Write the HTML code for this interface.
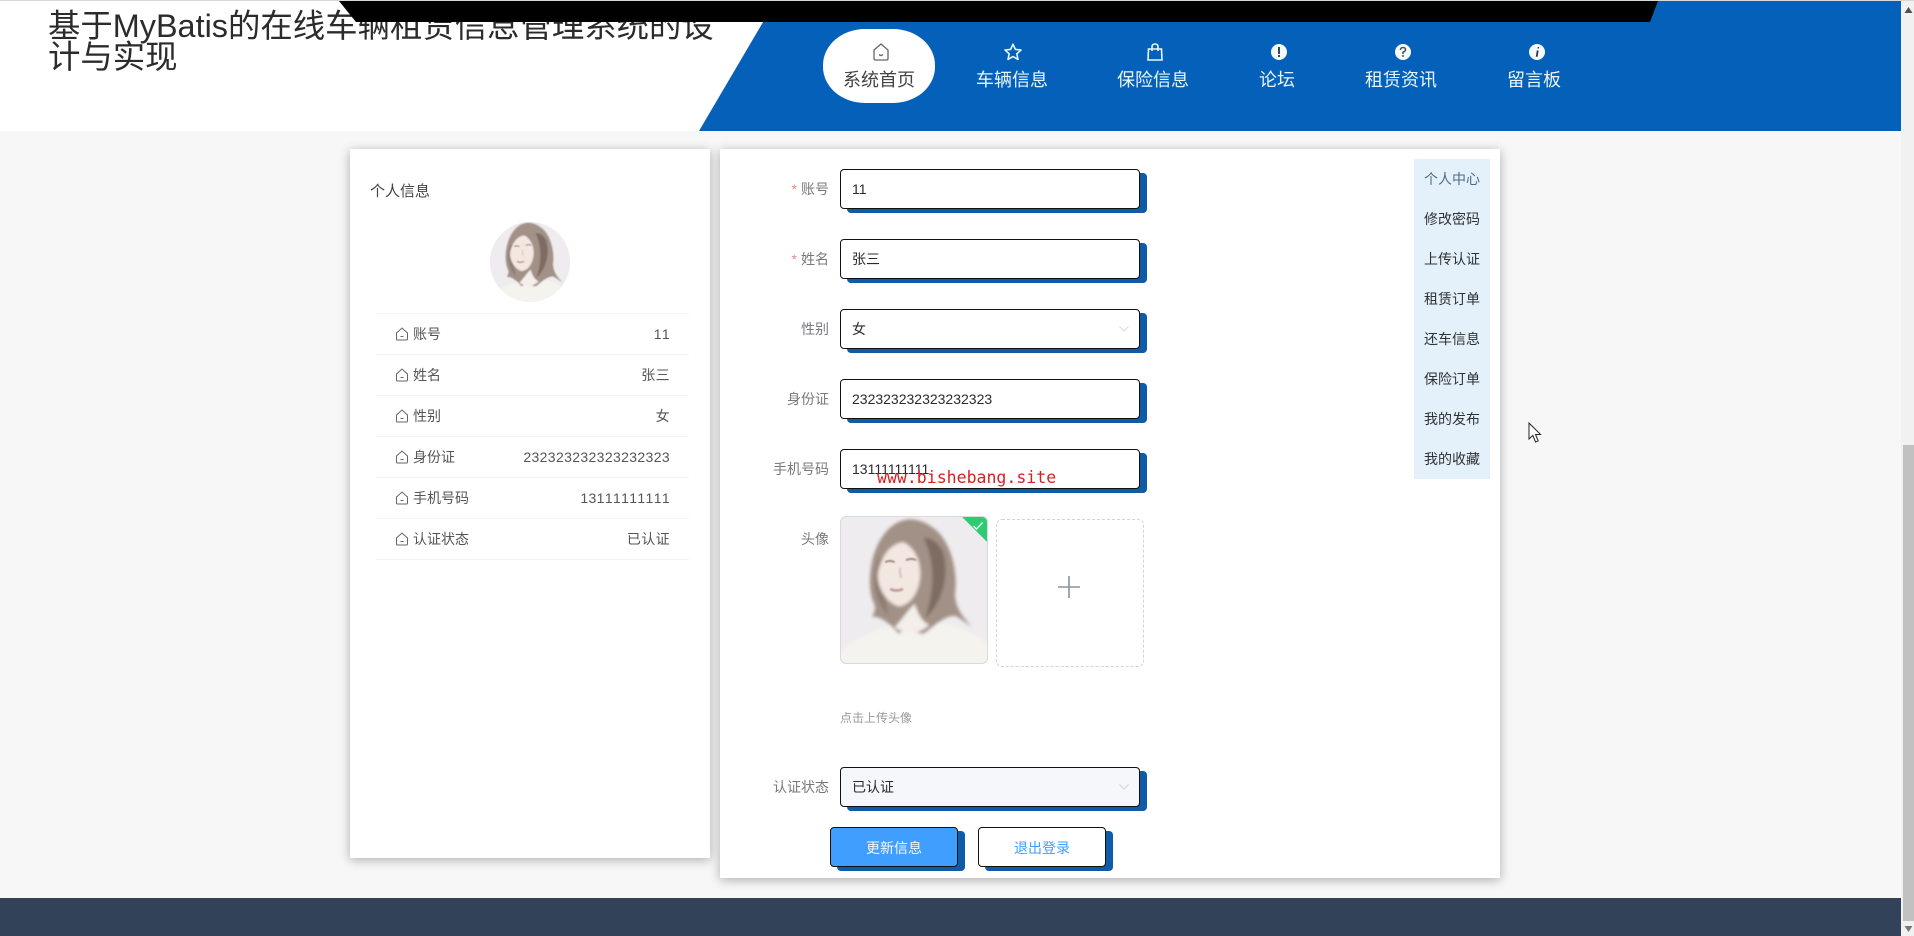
<!DOCTYPE html>
<html lang="zh">
<head>
<meta charset="utf-8">
<title>个人中心</title>
<style>
html,body{margin:0;padding:0;width:1914px;height:936px;overflow:hidden;background:#f7f7f7;}
body{position:relative;font-family:"Liberation Sans","Noto Sans CJK SC",sans-serif;color:#303133;}
.a{position:absolute;}
#hdr{left:0;top:0;width:1901px;height:131px;background:#fff;}
#topline{left:0;top:0;width:1914px;height:1px;background:#d8d8d8;z-index:9;}
#title{left:48px;top:11px;width:690px;font-size:32.4px;line-height:31px;color:#2b2b2b;}
.nl{position:absolute;top:68px;width:140px;text-align:center;font-size:18px;line-height:24px;color:#e8f6ff;}
.ni{position:absolute;top:42px;width:20px;height:20px;}
.panel{background:#fff;box-shadow:0 2px 10px rgba(0,0,0,.3);}
.row{position:absolute;left:376px;width:313px;height:41px;border-bottom:1px solid #f0f2f4;font-size:14px;color:#555;}
.row svg{position:absolute;left:19px;top:14px;}
.row .l{position:absolute;left:37px;top:1px;line-height:41px;}
.row .v{position:absolute;right:19px;top:1px;line-height:41px;letter-spacing:.36px;font-kerning:none;}
.lab{position:absolute;width:110px;left:719px;text-align:right;font-size:14px;line-height:20px;color:#77797c;}
.lab i{font-style:normal;color:#e58a8a;margin-right:4px;}
.inp{position:absolute;left:840px;width:298px;height:38px;border:1px solid #111;border-radius:4px;background:#fff;box-shadow:7px 4px 0 #0f5ba8;font-size:14px;line-height:38px;color:#2a2a2a;text-indent:11px;}
.inp svg{position:absolute;right:9px;top:15px;}
.btn{position:absolute;top:827px;width:126px;height:38px;border:1px solid #111;border-radius:4px;box-shadow:7px 4px 0 #0f5ba8;font-size:14px;line-height:40px;text-align:center;}
.m{position:absolute;left:1424px;font-size:14px;line-height:20px;color:#2f3134;white-space:nowrap;}
</style>
</head>
<body>
<svg width="0" height="0" style="position:absolute">
<defs>
<filter id="bl" x="-10%" y="-10%" width="120%" height="120%"><feGaussianBlur stdDeviation="5"/></filter>
<filter id="bl2" x="-20%" y="-20%" width="140%" height="140%"><feGaussianBlur stdDeviation="2.5"/></filter>
<g id="photo">
<rect x="0" y="0" width="480" height="480" fill="#eeecee"/>
<g filter="url(#bl)">
<path d="M0 440 C70 370 150 345 230 340 C310 335 390 340 480 420 L480 480 L0 480Z" fill="#f5f3ee"/>
<path d="M222 30 C165 34 128 88 112 150 C100 205 102 250 118 285 C124 304 112 312 112 320 C140 320 168 345 190 372 C215 350 245 372 265 372 C298 350 322 318 360 318 C378 328 395 342 410 352 C385 325 362 300 358 255 C368 190 348 110 310 70 C285 45 255 30 222 30Z" fill="#a29186"/>
<path d="M265 85 C295 150 302 225 270 325 C315 285 345 205 322 125 C305 95 285 85 265 85Z" fill="#7e6c62"/>
<path d="M130 150 C108 210 118 270 160 320 C150 260 130 220 150 140Z" fill="#8e7c71"/>
<path d="M205 98 C165 102 138 140 128 190 C124 228 150 278 190 290 C228 286 250 245 254 205 C258 160 242 118 205 98Z" fill="#f3e7e1"/>
<path d="M178 352 C200 330 215 305 238 282 C250 318 262 338 282 345 C245 378 212 375 178 352Z" fill="#f4efeb"/>
</g>
<g filter="url(#bl2)">
<path d="M150 158 q14 -8 28 0 M212 152 q16 -8 30 0" stroke="#6a564c" stroke-width="5" fill="none" opacity=".75"/>
<path d="M195 175 q-3 22 4 30" stroke="#d9c3ba" stroke-width="6" fill="none"/>
<path d="M165 238 q18 9 38 0" stroke="#b48380" stroke-width="8" fill="none" opacity=".75"/>
</g>
</g>
<path id="house" d="M1.5 6 L7 1 L12.5 6 V12 Q12.5 13 11.5 13 H2.5 Q1.5 13 1.5 12Z M5.5 9.5 H8.5" fill="none" stroke="#666" stroke-width="1"/>
</defs>
</svg>

<div id="topline" class="a"></div>
<div id="hdr" class="a"></div>
<div id="title" class="a">基于MyBatis的在线车辆租赁信息管理系统的设计与实现</div>
<svg class="a" style="left:0;top:0;" width="1901" height="131">
<polygon points="776,0 1901,0 1901,131 699,131" fill="#0460b9"/>
<polygon points="339,1 1658,1 1650,22 356,22" fill="#000"/>
</svg>

<div class="a" style="left:823px;top:29px;width:112px;height:74px;border-radius:42px/36px;background:#fff;"></div>
<div class="nl" style="left:809px;color:#444;">系统首页</div>
<div class="nl" style="left:942px;">车辆信息</div>
<div class="nl" style="left:1083px;">保险信息</div>
<div class="nl" style="left:1207px;">论坛</div>
<div class="nl" style="left:1331px;">租赁资讯</div>
<div class="nl" style="left:1464px;">留言板</div>

<svg class="ni" style="left:871px;" viewBox="0 0 20 20"><path d="M3 8 L10 2 L17 8 V16.5 Q17 18 15.5 18 H4.5 Q3 18 3 16.5Z M8 12.5 Q10 14.5 12 12.5" fill="none" stroke="#666" stroke-width="1.3"/></svg>
<svg class="ni" style="left:1003px;" viewBox="0 0 20 20"><path d="M10 2.2 L12.4 7.4 L18 8 L13.8 11.8 L15 17.4 L10 14.6 L5 17.4 L6.2 11.8 L2 8 L7.6 7.4Z" fill="none" stroke="#e8f6ff" stroke-width="1.6" stroke-linejoin="round"/></svg>
<svg class="ni" style="left:1145px;" viewBox="0 0 20 20"><path d="M3.5 7 H16.5 L17 18 H3 Z M7 9 V5 Q7 2 10 2 Q13 2 13 5 V9" fill="none" stroke="#e8f6ff" stroke-width="1.6"/></svg>
<svg class="ni" style="left:1269px;" viewBox="0 0 20 20"><circle cx="10" cy="10" r="8" fill="#f4fbff"/><rect x="9" y="5" width="2" height="7" fill="#444"/><rect x="9" y="13" width="2" height="2" fill="#444"/></svg>
<svg class="ni" style="left:1393px;" viewBox="0 0 20 20"><circle cx="10" cy="10" r="8" fill="#f4fbff"/><path d="M7.5 8 Q7.5 5.5 10 5.5 Q12.5 5.5 12.5 7.7 Q12.5 9 10 10.3 V12" fill="none" stroke="#555" stroke-width="1.6"/><rect x="9.2" y="13" width="1.7" height="1.8" fill="#555"/></svg>
<svg class="ni" style="left:1527px;" viewBox="0 0 20 20"><circle cx="10" cy="10" r="8" fill="#f4fbff"/><path d="M10.8 5 h1.4 l-.3 1.5 h-1.4z M9.8 8.5 h1.8 l-1 6.2 h-1.8z" fill="#333"/></svg>

<!-- left panel -->
<div class="a panel" style="left:350px;top:149px;width:360px;height:709px;"></div>
<div class="a" style="left:370px;top:181px;font-size:15px;line-height:22px;color:#444;">个人信息</div>
<div class="a" style="left:490px;top:222px;width:80px;height:80px;border-radius:50%;overflow:hidden;background:#eee;">
<svg width="80" height="80" viewBox="20 26 430 430"><use href="#photo"/></svg>
</div>
<div class="a" style="left:376px;top:313px;width:313px;height:1px;background:#f0f2f4;"></div>
<div class="row" style="top:313px;"><svg width="14" height="14"><use href="#house"/></svg><span class="l">账号</span><span class="v">11</span></div>
<div class="row" style="top:354px;"><svg width="14" height="14"><use href="#house"/></svg><span class="l">姓名</span><span class="v">张三</span></div>
<div class="row" style="top:395px;"><svg width="14" height="14"><use href="#house"/></svg><span class="l">性别</span><span class="v">女</span></div>
<div class="row" style="top:436px;"><svg width="14" height="14"><use href="#house"/></svg><span class="l">身份证</span><span class="v">232323232323232323</span></div>
<div class="row" style="top:477px;"><svg width="14" height="14"><use href="#house"/></svg><span class="l">手机号码</span><span class="v">13111111111</span></div>
<div class="row" style="top:518px;"><svg width="14" height="14"><use href="#house"/></svg><span class="l">认证状态</span><span class="v">已认证</span></div>

<!-- right panel -->
<div class="a panel" style="left:720px;top:149px;width:780px;height:729px;"></div>

<div class="lab" style="top:179px;"><i>*</i>账号</div>
<div class="inp" style="top:169px;">11</div>
<div class="lab" style="top:249px;"><i>*</i>姓名</div>
<div class="inp" style="top:239px;">张三</div>
<div class="lab" style="top:319px;">性别</div>
<div class="inp" style="top:309px;">女<svg width="12" height="8"><path d="M1.5 1.5 L6 6 L10.5 1.5" fill="none" stroke="#d6d9de" stroke-width="1"/></svg></div>
<div class="lab" style="top:389px;">身份证</div>
<div class="inp" style="top:379px;">232323232323232323</div>
<div class="lab" style="top:459px;">手机号码</div>
<div class="inp" style="top:449px;">13111111111</div>
<div class="a" style="left:877px;top:467px;font-family:'DejaVu Sans Mono',monospace;font-size:16.55px;line-height:22px;color:#d91f22;z-index:5;white-space:nowrap;">www.bishebang.site</div>

<div class="lab" style="top:529px;">头像</div>
<div class="a" style="left:840px;top:516px;width:148px;height:148px;border-radius:6px;overflow:hidden;">
<svg width="148" height="148" viewBox="15 20 442 442" style="display:block"><use href="#photo"/></svg>
<div class="a" style="right:-19px;top:-19px;width:38px;height:38px;background:#2ecc71;transform:rotate(45deg);"></div>
<svg class="a" style="right:4px;top:5px;" width="12" height="10"><path d="M1.5 5 L4.5 8 L10.5 1.5" fill="none" stroke="#e8fff0" stroke-width="1.3"/></svg>
<div class="a" style="left:0;top:0;width:146px;height:146px;border:1px solid #d8dade;border-radius:6px;"></div>
</div>
<div class="a" style="left:996px;top:519px;width:146px;height:146px;border:1px dashed #d0d4d8;border-radius:6px;background:#fff;"></div>
<svg class="a" style="left:1057px;top:575px;" width="24" height="24"><path d="M12 1 V23 M1 12 H23" stroke="#8c939d" stroke-width="1.6"/></svg>
<div class="a" style="left:840px;top:709px;font-size:12px;line-height:18px;color:#999;">点击上传头像</div>

<div class="lab" style="top:777px;">认证状态</div>
<div class="inp" style="top:767px;background:#f5f7fa;">已认证<svg width="12" height="8"><path d="M1.5 1.5 L6 6 L10.5 1.5" fill="none" stroke="#d0d3d9" stroke-width="1"/></svg></div>
<div class="btn" style="left:830px;background:#409eff;color:#f2f8ff;">更新信息</div>
<div class="btn" style="left:978px;background:#fff;color:#409eff;">退出登录</div>

<!-- side menu -->
<div class="a" style="left:1414px;top:159px;width:76px;height:320px;background:#e4f1fb;"></div>
<div class="m" style="top:169px;color:#4c6c88;">个人中心</div>
<div class="m" style="top:209px;">修改密码</div>
<div class="m" style="top:249px;">上传认证</div>
<div class="m" style="top:289px;">租赁订单</div>
<div class="m" style="top:329px;">还车信息</div>
<div class="m" style="top:369px;">保险订单</div>
<div class="m" style="top:409px;">我的发布</div>
<div class="m" style="top:449px;">我的收藏</div>

<!-- cursor -->
<svg class="a" style="left:1528px;top:422px;z-index:8;" width="14" height="22"><path d="M1 1 V17 L4.8 13.4 L7.6 20 L10.2 18.9 L7.5 12.6 L12.5 12.4Z" fill="#fff" stroke="#222" stroke-width="1"/></svg>

<!-- footer -->
<div class="a" style="left:0;top:898px;width:1901px;height:38px;background:#324259;"></div>

<!-- scrollbar -->
<div class="a" style="left:1901px;top:0;width:13px;height:936px;background:#f1f1f1;"></div>
<div class="a" style="left:1903px;top:445px;width:11px;height:476px;background:#c1c1c1;"></div>
<svg class="a" style="left:1903px;top:6px;" width="11" height="8"><path d="M5.5 1 L9.5 7 H1.5Z" fill="#505050"/></svg>
<svg class="a" style="left:1903px;top:925px;" width="11" height="8"><path d="M1.5 1 H9.5 L5.5 7Z" fill="#777"/></svg>
</body>
</html>
